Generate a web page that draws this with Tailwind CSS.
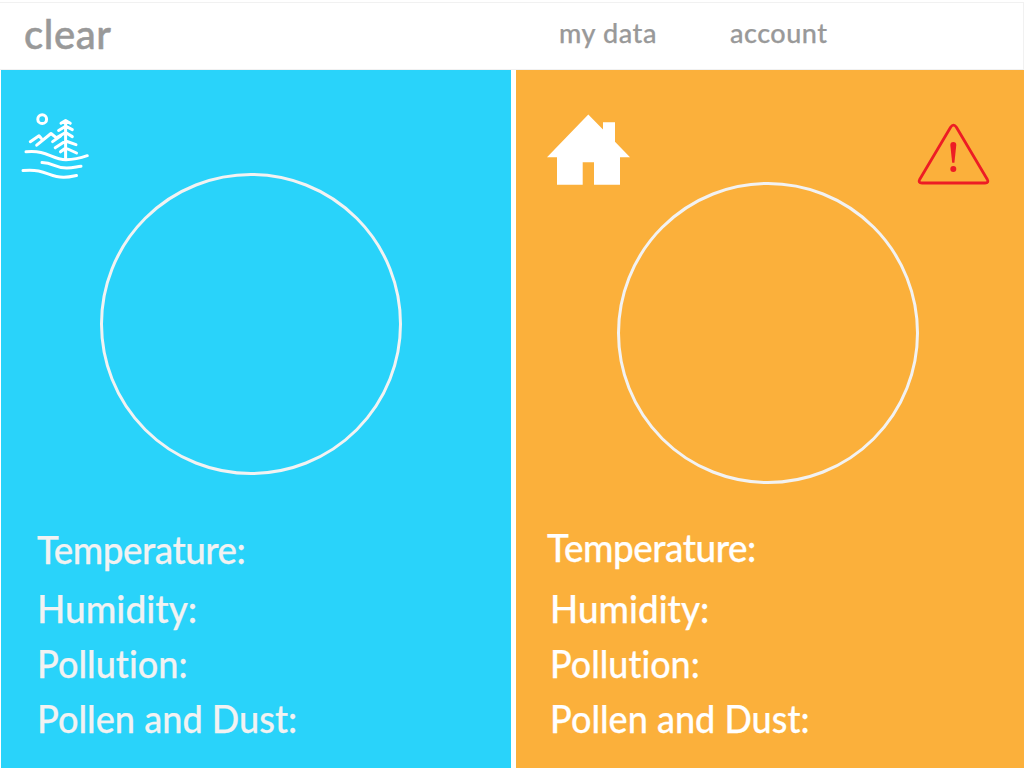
<!DOCTYPE html>
<html lang="en">
<head>
<meta charset="utf-8">
<title>clear</title>
<script src="https://cdn.jsdelivr.net/npm/@tailwindcss/browser@4"></script>
</head>
<body class="flex h-[768px] w-[1024px] flex-col overflow-hidden bg-white pt-[2px] font-['Lato',sans-serif] font-medium [font-variant-ligatures:none]">
  <header class="flex h-[68px] shrink-0 border border-l-0 border-[#f1f1f1] text-[#999999] [-webkit-text-stroke:0.25px_#999999]">
    <h1 class="ml-[24px] mt-[7px] w-[535px] text-[40px] leading-[48px] tracking-[0.6px] [-webkit-text-stroke:0.5px_#999999]">clear</h1>
    <nav class="mt-[12px] flex text-[27px] leading-[36px]">
      <a class="w-[171px] tracking-[0.6px]">my data</a>
      <a class="tracking-[0.5px]">account</a>
    </nav>
  </header>
  <main class="flex h-[698px] gap-[5px] pl-px">
    <section class="flex w-[510px] shrink-0 flex-col bg-[#29d3fa] text-[#f2f2f2]">
      <div class="grid h-[459px] shrink-0">
        <svg class="col-start-1 row-start-1 ml-[9px] mt-[30px]" width="100" height="90" viewBox="0 0 100 90" fill="none" stroke="#fff" stroke-width="3" stroke-linecap="round" stroke-linejoin="round">
          <circle cx="32.2" cy="19.2" r="4.4"/>
          <path d="M20.3 41.7 29 35.7 31.2 38.2M26.7 45.2 41 33.5 46.8 38.2M42.6 41.6 50.5 36"/>
          <path d="M55.6 21V58.5M51 23.3 55.6 20.5 60.3 23.3M48.6 30.5 55.6 26.2 62.3 29.6M47.2 37.4 55.6 32.5 62.3 36.6M45.2 47.8 55.6 41 66 44.7M50.5 51.8 55.6 48 66.5 53"/>
          <path d="M16 51.8C38 49.7 41 59.7 56 59.7 65 59.7 70 58.3 77.3 55.7M32 62.5C44 62.8 45 68.2 57 68 63 68 66 66.8 71 66.2M13 70.6C36 68.3 39 77.8 54 77.3 59 77.3 62 76.5 66.5 75.5"/>
        </svg>
        <svg class="col-start-1 row-start-1 ml-[98px] mt-[102px]" width="304" height="304" viewBox="0 0 304 304" fill="none" stroke="#f2f2f2" stroke-width="3"><circle cx="152" cy="152" r="149.5"/></svg>
      </div>
      <div class="flex flex-col items-start whitespace-nowrap pl-[36px] text-[39px] leading-[40px] [-webkit-text-stroke:0.25px_#f2f2f2]">
        <p class="h-[59px] origin-left scale-x-[0.943] tracking-[-0.5px]">Temperature:</p>
        <p class="h-[55px] origin-left scale-x-[0.95]">Humidity:</p>
        <p class="h-[55px] origin-left scale-x-[0.925]">Pollution:</p>
        <p class="origin-left scale-x-[0.926]">Pollen and Dust:</p>
      </div>
    </section>
    <section class="flex w-[508px] shrink-0 flex-col bg-[#fbb03b] text-white">
      <div class="grid h-[457px] shrink-0">
        <svg class="col-start-1 row-start-1 ml-[19px] mt-[30px]" width="110" height="95" viewBox="0 0 110 95" fill="#fff">
          <path d="M53.3 14.5 68 29.5V22.2H80V41.8L95 57.2H85V84.7H59V62.2H47.7V84.7H22V57.2H12Z"/>
        </svg>
        <svg class="col-start-1 row-start-1 ml-[389px] mt-[40px]" width="100" height="85" viewBox="0 0 100 85">
          <path d="M45.6 17.2 14.8 69.2Q12.8 73 17 73H80Q84.2 73 82.2 69.2L51.4 17.2Q48.5 13.2 45.6 17.2Z" fill="none" stroke="#ed1c24" stroke-width="2.8" stroke-linejoin="round"/>
          <path d="M45.3 35Q45.3 32 48.3 32T51.3 35L49.4 52.8H47.2Z" fill="#ed1c24"/>
          <circle cx="48.3" cy="59" r="3" fill="#ed1c24"/>
        </svg>
        <svg class="col-start-1 row-start-1 ml-[100px] mt-[111px]" width="304" height="304" viewBox="0 0 304 304" fill="none" stroke="#f2f2f2" stroke-width="3"><circle cx="152" cy="152" r="149.5"/></svg>
      </div>
      <div class="flex flex-col items-start whitespace-nowrap pl-[31px] text-[39px] leading-[40px] [-webkit-text-stroke:0.25px_#fff]">
        <p class="h-[61px] origin-left scale-x-[0.945] tracking-[-0.5px]">Temperature:</p>
        <p class="ml-[3px] h-[55px] origin-left scale-x-[0.945]">Humidity:</p>
        <p class="ml-[3px] h-[55px] origin-left scale-x-[0.92]">Pollution:</p>
        <p class="ml-[3px] origin-left scale-x-[0.924]">Pollen and Dust:</p>
      </div>
    </section>
  </main>
</body>
</html>
